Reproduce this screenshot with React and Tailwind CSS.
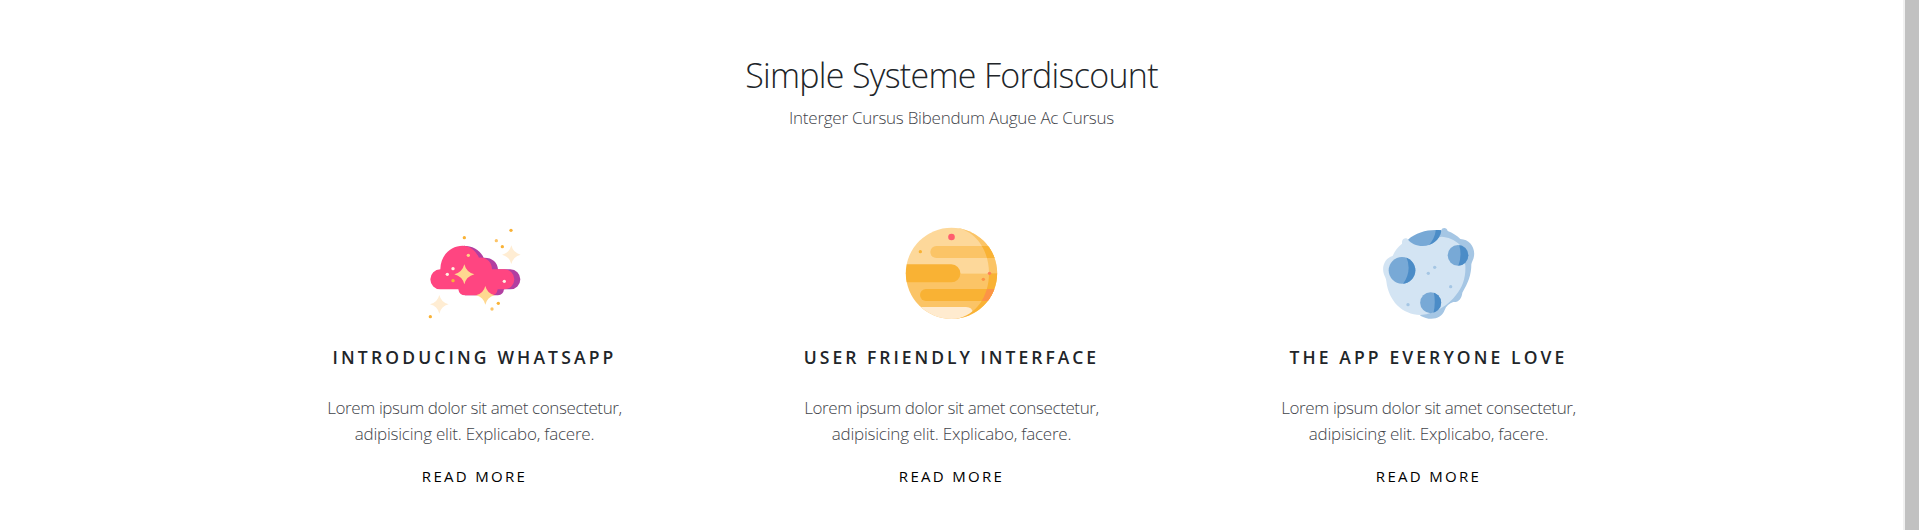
const sparkle = (x, y, r) =>
  `M${x} ${y - r}Q${x + r * 0.2} ${y - r * 0.2} ${x + r} ${y}Q${x + r * 0.2} ${y + r * 0.2} ${x} ${y + r}Q${x - r * 0.2} ${y + r * 0.2} ${x - r} ${y}Q${x - r * 0.2} ${y - r * 0.2} ${x} ${y - r}Z`;

function CloudIcon() {
  return (
    <svg className="h-[105px] w-[110px]" viewBox="0 0 330 315" aria-hidden="true">
      <path
        fill="#b13fa1"
        d="M126 77C158 76 180 90 191 113C216 112 233 127 234 148H271A30 30 0 0 1 271 208H252Q250 225 234 226H135V77Z"
      />
      <path
        fill="#ff4581"
        d="M61 148C62 104 93 77 128 77C151 77 168 94 177 113C203 111 216 130 216 148H253A30 30 0 0 1 253 208H233Q231 226 213 226H136Q117 226 115 208H61A30 30 0 0 1 61 148Z"
      />
      <path fill="#ffd890" d={sparkle(133, 163, 30)} />
      <path fill="#ffd890" d={sparkle(196, 226, 28)} />
      <path fill="#ffedd3" d={sparkle(274, 104, 28)} />
      <path fill="#ffedd3" d={sparkle(58, 253, 28)} />
      <g fill="#f9b236">
        <circle cx="133" cy="53" r="5" />
        <circle cx="273" cy="31" r="5" />
        <circle cx="247" cy="80" r="5" />
        <circle cx="31" cy="290" r="5" />
        <circle cx="235" cy="250" r="5" />
        <circle cx="99" cy="182" r="5" />
      </g>
      <g fill="#fcc468">
        <circle cx="229" cy="62" r="5" />
        <circle cx="216" cy="267" r="5" />
      </g>
      <circle cx="145" cy="106" r="5" fill="#ffd285" />
      <g fill="#fff0e2">
        <circle cx="99" cy="146" r="5" />
        <circle cx="82" cy="163" r="5" />
        <circle cx="253" cy="184" r="5" />
      </g>
    </svg>
  );
}

function PlanetIcon() {
  return (
    <svg className="h-[105px] w-[110px]" viewBox="6 0 330 315" aria-hidden="true">
      <defs>
        <clipPath id="planet-disc">
          <circle cx="169.500" cy="160" r="137" />
        </clipPath>
        <clipPath id="planet-shade">
          <path d="M178 22C240 30 282 88 282 160C282 232 240 290 178 298H320V22Z" />
        </clipPath>
      </defs>
      <g clipPath="url(#planet-disc)">
        <path fill="#fdd89a" d="M30 20H310V160H30Z" />
        <path fill="#fbc466" d="M30 160H310V300H30Z" />
        <path fill="#fbc466" d="M124 78H310V114H124A18 18 0 0 1 124 78Z" />
        <path fill="#f9b234" d="M30 133H169A27 27 0 0 1 169 187H30Z" />
        <path fill="#f9b234" d="M93 207H310V243H93A18 18 0 0 1 93 207Z" />
        <path fill="#ffebcf" d="M30 261H213Q233 261 233 280V300H30Z" />
        <g clipPath="url(#planet-shade)">
          <path fill="#fbc466" d="M170 20H310V160H170Z" />
          <path fill="#f9b234" d="M170 78H310V114H170Z" />
          <path fill="#f9b234" d="M170 160H310V300H170Z" />
          <path fill="#fc9446" d="M170 207H310V243H170Z" />
        </g>
        <circle cx="169.500" cy="51" r="10" fill="#ff5d6e" />
        <circle cx="76" cy="95" r="5" fill="#f9b234" />
        <circle cx="283.500" cy="160" r="5" fill="#ff8056" />
        <circle cx="265" cy="178" r="5" fill="#fc9446" />
      </g>
    </svg>
  );
}

function MoonIcon() {
  return (
    <svg className="h-[105px] w-[110px]" viewBox="-3 0 330 315" aria-hidden="true">
      <defs>
        <clipPath id="crater-left">
          <circle cx="81" cy="151" r="40" />
        </clipPath>
        <clipPath id="crater-right">
          <circle cx="249" cy="106" r="31" />
        </clipPath>
        <clipPath id="crater-bottom">
          <circle cx="167" cy="248" r="31.500" />
        </clipPath>
        <clipPath id="crater-top">
          <path d="M99 59C124 36 163 27 198 31L199 34C193 60 172 78 143 78C123 78 108 70 99 59Z" />
        </clipPath>
      </defs>
      <path
        fill="#a5c6e4"
        d="M190 34L199 31C201 21 216 21 218 33C233 39 246 47 256 57C284 58 301 83 297 108C296 119 290 125 289 133C289 165 279 190 262 218C260 235 252 247 235 246C223 250 213 258 209 270C200 297 166 304 136 287L120 200Z"
      />
      <path
        fill="#d3e4f3"
        d="M99 59C98 53 83 52 81 65V71C68 82 58 94 53 108C30 114 20 139 26 160C28 169 34 175 34 184C41 244 82 284 136 285C186 281 222 252 243 225C263 202 273 170 271 136L255 75C238 58 219 51 199 50L143 65Z"
      />
      <g clipPath="url(#crater-left)">
        <path fill="#78a9d6" d="M35 105H130V200H35Z" />
        <path fill="#4b8cc7" d="M91 105Q115 151 81 196H130V105Z" />
      </g>
      <g clipPath="url(#crater-right)">
        <path fill="#78a9d6" d="M215 70H285V140H215Z" />
        <path fill="#4b8cc7" d="M251 70Q263 106 249 140H285V70Z" />
      </g>
      <g clipPath="url(#crater-bottom)">
        <path fill="#78a9d6" d="M130 210H205V285H130Z" />
        <path fill="#4b8cc7" d="M175 210Q184 248 174 285H205V210Z" />
      </g>
      <g clipPath="url(#crater-top)">
        <path fill="#78a9d6" d="M90 20H210V90H90Z" />
        <path fill="#4b8cc7" d="M183 22C182 47 174 62 158 80H210V22Z" />
      </g>
      <g fill="#a5c6e4">
        <circle cx="179" cy="142" r="5" />
        <circle cx="160" cy="160" r="5" />
        <circle cx="227" cy="200" r="5" />
        <circle cx="99" cy="254" r="5" />
      </g>
    </svg>
  );
}

const features = [
  { title: 'Introducing WhatsApp', spacing: 'tracking-[3.15px]', Icon: CloudIcon },
  { title: 'User Friendly Interface', spacing: 'tracking-[3px]', Icon: PlanetIcon },
  { title: 'The App Everyone Love', spacing: 'tracking-[3.1px]', Icon: MoonIcon },
];

function Feature({ title, spacing, Icon }) {
  return (
    <article className="flex flex-col items-center text-center">
      <Icon />
      <h3 className={`mt-[18px] text-[17.5px] leading-7 font-semibold whitespace-nowrap text-[#212529] uppercase ${spacing}`}>
        {title}
      </h3>
      <p className="mt-6 flex flex-col items-center text-[17px] leading-[26px] font-light whitespace-nowrap text-[#3f444a]">
        <span className="tracking-[-0.4px]">Lorem ipsum dolor sit amet consectetur,</span>
        <span className="tracking-[-0.22px]">adipisicing elit. Explicabo, facere.</span>
      </p>
      <a href="#" className="mt-[17px] text-[15px] leading-6 tracking-[2.3px] text-black uppercase">
        Read More
      </a>
    </article>
  );
}

export default function App() {
  return (
    <div className="flex h-[530px] overflow-hidden bg-white font-['Open_Sans','Noto_Sans',sans-serif]">
      <main className="flex flex-1 flex-col items-center pt-[53px]">
        <h2 className="text-[34px] leading-[44px] font-light tracking-[-0.7px] text-[#212529]">
          Simple Systeme Fordiscount
        </h2>
        <p className="mt-[7px] text-[17px] leading-7 font-light tracking-[-0.25px] text-[#3f444a]">
          Interger Cursus Bibendum Augue Ac Cursus
        </p>
        <section className="mt-[88px] grid w-[1431px] grid-cols-3">
          {features.map((feature) => (
            <Feature key={feature.title} {...feature} />
          ))}
        </section>
      </main>
      <div className="w-4 bg-[#f1f1f1] pl-0.5">
        <div className="h-full bg-[#c1c1c1]" />
      </div>
    </div>
  );
}
